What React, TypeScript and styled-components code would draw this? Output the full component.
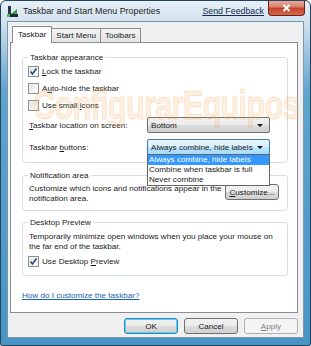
import React from "react";
import styled, { createGlobalStyle, css } from "styled-components";

const GlobalStyle = createGlobalStyle`
  html, body {
    margin: 0;
    padding: 0;
    background: #ffffff;
  }
  * {
    box-sizing: border-box;
  }
`;

const uiFont = `"Liberation Sans", Arial, sans-serif`;

const Window = styled.div`
  position: relative;
  width: 311px;
  height: 346px;
  display: flex;
  flex-direction: column;
  border: 1px solid #24445e;
  border-radius: 6px 6px 2px 2px;
  background: linear-gradient(
    to bottom,
    #e6eff6 0px,
    #d2e3f0 20px,
    #a9cbe3 45px,
    #5ea4cf 90px,
    #4795c4 100%
  );
  font-family: ${uiFont};
  font-size: 8.1px;
  color: #1a1a1a;
  overflow: hidden;
`;

const TitleBar = styled.div`
  height: 21px;
  display: flex;
  align-items: flex-start;
  padding-left: 5px;
`;

const AppIcon = styled.svg`
  width: 13px;
  height: 13px;
  margin-top: 4px;
  flex-shrink: 0;
`;

const TitleText = styled.div`
  margin-left: 4px;
  margin-top: 4px;
  font-size: 8.9px;
  line-height: 12px;
  color: #1b1b1b;
`;

const Feedback = styled.a`
  margin-left: auto;
  margin-top: 4px;
  font-size: 8.8px;
  line-height: 12px;
  color: #15294a;
  text-decoration: underline;
`;

const CloseButton = styled.div`
  width: 37px;
  height: 16px;
  margin: -1px 5px 0 4px;
  border: 1px solid #6b2216;
  border-top: none;
  border-radius: 0 0 4px 4px;
  background: linear-gradient(
    to bottom,
    #eab3a4 0%,
    #d7826f 45%,
    #c5432b 55%,
    #d6684c 100%
  );
  display: flex;
  align-items: center;
  justify-content: center;
`;

const Client = styled.div`
  flex: 1;
  margin: 0 6px 7px 6px;
  border: 1px solid #7f97ab;
  background: #f0f0f0;
  display: flex;
  flex-direction: column;
  padding: 4px 5px 3px 2px;
`;

const TabStrip = styled.div`
  display: flex;
  align-items: flex-end;
  padding-left: 2px;
  height: 16px;
  position: relative;
  z-index: 1;
`;

const Tab = styled.div<{ $active?: boolean }>`
  height: 14px;
  padding: 0 4px;
  display: flex;
  align-items: center;
  border: 1px solid #898c95;
  border-bottom: none;
  background: linear-gradient(to bottom, #f4f4f4, #e3e3e3);
  margin-left: -1px;
  line-height: 12px;
  ${(p) =>
    p.$active &&
    css`
      height: 17px;
      margin-bottom: -1px;
      background: #ffffff;
      padding: 2px 5px 0;
      margin-left: 0;
      position: relative;
      z-index: 2;
      align-items: flex-start;
    `}
`;

const Panel = styled.div`
  height: 271px;
  border: 1px solid #898c95;
  background: #ffffff;
  display: flex;
  flex-direction: column;
  padding: 14px 9px 0 11px;
`;

const GroupBox = styled.div<{ $gap?: number }>`
  border: 1px solid #d5dfe5;
  border-radius: 3px;
  padding: 0 8px 0 5px;
  margin-top: ${(p) => p.$gap ?? 0}px;
  display: flex;
  flex-direction: column;
`;

const GroupTitle = styled.div`
  margin: -6px 0 0 0;
  padding: 0 2px;
  width: fit-content;
  background: #ffffff;
  line-height: 11px;
  color: #1a1a1a;
`;

const CheckRow = styled.label<{ $top?: number }>`
  display: flex;
  align-items: center;
  gap: 3px;
  height: 13px;
  margin-top: ${(p) => p.$top ?? 4}px;
  line-height: 11px;
`;

const Box = styled.span`
  width: 11px;
  height: 11px;
  border: 1px solid #8e8f8f;
  background: linear-gradient(135deg, #d9d9d9 0%, #f4f4f4 60%, #ffffff 100%);
  box-shadow: inset 0 0 0 1px #f4f4f4;
  display: flex;
  align-items: center;
  justify-content: center;
  flex-shrink: 0;
`;

const FieldRow = styled.div<{ $top: number }>`
  display: grid;
  grid-template-columns: 118px 123px;
  align-items: center;
  margin-top: ${(p) => p.$top}px;
  padding-left: 1px;
  position: relative;
`;

const Combo = styled.div<{ $focus?: boolean }>`
  height: 16px;
  border: 1px solid #707070;
  border-radius: 2px;
  background: linear-gradient(
    to bottom,
    #f2f2f2 0%,
    #ebebeb 50%,
    #dddddd 51%,
    #cfcfcf 100%
  );
  display: flex;
  align-items: center;
  padding: 0 6px 0 3px;
  line-height: 11px;
  ${(p) =>
    p.$focus &&
    css`
      border-color: #3c7fb1;
      background: linear-gradient(
        to bottom,
        #eaf6fd 0%,
        #d9f0fc 50%,
        #bee6fd 51%,
        #a7d9f5 100%
      );
    `}
`;

const ComboText = styled.span`
  flex: 1;
  white-space: nowrap;
  overflow: hidden;
`;

const Arrow = styled.span`
  width: 0;
  height: 0;
  border-left: 3px solid transparent;
  border-right: 3px solid transparent;
  border-top: 3px solid #1a1a1a;
`;

const DropList = styled.div`
  position: absolute;
  left: 119px;
  top: 15px;
  width: 123px;
  border: 1px solid #646464;
  background: #ffffff;
  z-index: 5;
`;

const DropItem = styled.div<{ $selected?: boolean }>`
  height: 10px;
  line-height: 10px;
  padding-left: 1px;
  white-space: nowrap;
  ${(p) =>
    p.$selected &&
    css`
      background: #3399ff;
      color: #ffffff;
    `}
`;

const Paragraph = styled.div<{ $top: number }>`
  margin-top: ${(p) => p.$top}px;
  padding-left: 1px;
  line-height: 10px;
`;

const NotifyRow = styled.div`
  display: flex;
  align-items: flex-start;
  justify-content: space-between;
  margin-top: 3px;
  padding-bottom: 6px;
`;

const NotifyText = styled.div`
  width: 196px;
  line-height: 10px;
  padding-left: 1px;
`;

const Button = styled.div<{ $variant?: "default" | "disabled" }>`
  width: 54px;
  height: 16px;
  border: 1px solid #707070;
  border-radius: 3px;
  background: linear-gradient(
    to bottom,
    #f2f2f2 0%,
    #ebebeb 50%,
    #dddddd 51%,
    #cfcfcf 100%
  );
  display: flex;
  align-items: center;
  justify-content: center;
  line-height: 11px;
  color: #1a1a1a;
  white-space: nowrap;
  ${(p) =>
    p.$variant === "default" &&
    css`
      border-color: #3c7fb1;
      box-shadow: inset 0 0 0 1px #48d8fb;
    `}
  ${(p) =>
    p.$variant === "disabled" &&
    css`
      border-color: #adb2b5;
      background: #f4f4f4;
      color: #838383;
    `}
`;

const HelpLink = styled.a`
  margin-top: 14px;
  color: #1a62b0;
  text-decoration: underline;
  line-height: 11px;
  width: fit-content;
`;

const ButtonBar = styled.div`
  display: flex;
  justify-content: flex-end;
  gap: 6px;
  margin-top: 5px;
`;

const Watermark = styled.div`
  position: absolute;
  left: 32px;
  top: 82px;
  font-family: "Liberation Sans", sans-serif;
  font-weight: bold;
  font-size: 40px;
  letter-spacing: -1px;
  color: rgba(246, 178, 96, 0.2);
  -webkit-text-stroke: 1px rgba(236, 160, 70, 0.25);
  transform: scaleX(0.77);
  transform-origin: left top;
  pointer-events: none;
  white-space: nowrap;
  z-index: 3;
`;

const U = styled.span`
  text-decoration: underline;
`;

const Check = () => (
  <svg width="9" height="9" viewBox="0 0 9 9">
    <path
      d="M1.5 4.5 L3.5 7 L7.5 1.5"
      fill="none"
      stroke="#2a4a7a"
      strokeWidth="1.6"
    />
  </svg>
);

const CheckBox = ({
  checked,
  children,
  top,
}: {
  checked?: boolean;
  children: React.ReactNode;
  top?: number;
}) => (
  <CheckRow $top={top}>
    <Box>{checked && <Check />}</Box>
    <span>{children}</span>
  </CheckRow>
);

const App = () => {
  return (
    <>
      <GlobalStyle />
      <Window>
        <TitleBar>
          <AppIcon viewBox="0 0 13 13">
            <rect x="1" y="9" width="11" height="3" fill="#1d2a2f" />
            <rect x="2" y="1" width="3" height="9" fill="#2a3a40" />
            <path d="M5 9 L11 4 L11 9 Z" fill="#3c9a4a" />
            <rect x="1" y="9" width="3" height="3" fill="#4fb35a" />
          </AppIcon>
          <TitleText>Taskbar and Start Menu Properties</TitleText>
          <Feedback>Send Feedback</Feedback>
          <CloseButton>
            <svg width="9" height="8" viewBox="0 0 9 8">
              <path
                d="M1.5 1 L7.5 7 M7.5 1 L1.5 7"
                stroke="#ffffff"
                strokeWidth="2"
              />
            </svg>
          </CloseButton>
        </TitleBar>

        <Client>
          <TabStrip>
            <Tab $active>Taskbar</Tab>
            <Tab>Start Menu</Tab>
            <Tab>Toolbars</Tab>
          </TabStrip>

          <Panel>
            <GroupBox>
              <GroupTitle>Taskbar appearance</GroupTitle>
              <CheckBox checked top={2}>
                <U>L</U>ock the taskbar
              </CheckBox>
              <CheckBox>
                A<U>u</U>to-hide the taskbar
              </CheckBox>
              <CheckBox>
                Use small <U>i</U>cons
              </CheckBox>
              <FieldRow $top={5}>
                <span>
                  <U>T</U>askbar location on screen:
                </span>
                <Combo>
                  <ComboText>Bottom</ComboText>
                  <Arrow />
                </Combo>
              </FieldRow>
              <FieldRow $top={6}>
                <span>
                  Taskbar <U>b</U>uttons:
                </span>
                <Combo $focus>
                  <ComboText>Always combine, hide labels</ComboText>
                  <Arrow />
                </Combo>
                <DropList>
                  <DropItem $selected>Always combine, hide labels</DropItem>
                  <DropItem>Combine when taskbar is full</DropItem>
                  <DropItem>Never combine</DropItem>
                </DropList>
              </FieldRow>
              <div style={{ height: 7 }} />
            </GroupBox>

            <GroupBox $gap={12}>
              <GroupTitle>Notification area</GroupTitle>
              <NotifyRow>
                <NotifyText>
                  Customize which icons and notifications appear in the
                  notification area.
                </NotifyText>
                <Button>
                  <U>C</U>ustomize...
                </Button>
              </NotifyRow>
            </GroupBox>

            <GroupBox $gap={11}>
              <GroupTitle>Desktop Preview</GroupTitle>
              <Paragraph $top={4}>
                Temporarily minimize open windows when you place your mouse on
                the far end of the taskbar.
              </Paragraph>
              <CheckBox checked top={3}>
                Use Desktop <U>P</U>review
              </CheckBox>
              <div style={{ height: 7 }} />
            </GroupBox>

            <HelpLink>How do I customize the taskbar?</HelpLink>
          </Panel>

          <ButtonBar>
            <Button $variant="default">OK</Button>
            <Button>Cancel</Button>
            <Button $variant="disabled">
              <U>A</U>pply
            </Button>
          </ButtonBar>
        </Client>

        <Watermark>ConfigurarEquipos</Watermark>
      </Window>
    </>
  );
};

export default App;
